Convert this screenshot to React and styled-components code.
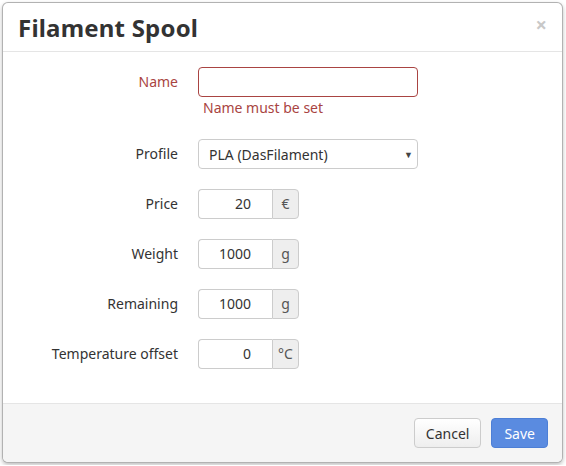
import React from "react";
import styled, { createGlobalStyle } from "styled-components";

const GlobalStyle = createGlobalStyle`
  html, body {
    margin: 0;
    background: #ffffff;
    font-family: "Noto Sans", "Open Sans", sans-serif;
    font-size: 14px;
    color: #333;
  }
  * { box-sizing: border-box; }
`;

const Page = styled.div`
  padding: 2px;
`;

const Modal = styled.div`
  width: 561px;
  height: 461px;
  display: flex;
  flex-direction: column;
  background: #fff;
  border: 1px solid rgba(0, 0, 0, 0.3);
  border-radius: 6px;
  box-shadow: 0 2px 4px rgba(0, 0, 0, 0.25);
  overflow: hidden;
`;

const Header = styled.div`
  display: flex;
  align-items: center;
  justify-content: space-between;
  height: 49px;
  padding: 0 15px;
  border-bottom: 1px solid #e5e5e5;
`;

const Title = styled.h3`
  margin: 0;
  font-size: 24px;
  font-weight: 700;
  color: #333;
  line-height: 26px;
  padding-top: 2px;
  letter-spacing: 0.2px;
`;

const Close = styled.span`
  font-size: 20px;
  font-weight: 700;
  color: #c8c8c8;
  line-height: 1;
  margin-top: -4px;
`;

const Body = styled.div`
  flex: 1;
  padding: 15px;
  display: flex;
  flex-direction: column;
  gap: 20px;
`;

const Row = styled.div`
  display: grid;
  grid-template-columns: 160px auto;
  column-gap: 20px;
  align-items: start;
`;

const Label = styled.label`
  text-align: right;
  line-height: 30px;
  color: ${({ $error }) => ($error ? "#a94442" : "#333")};
`;

const Field = styled.div`
  display: flex;
  flex-direction: column;
`;

const TextInput = styled.div`
  width: 220px;
  height: 30px;
  border: 1px solid ${({ $error }) => ($error ? "#a94442" : "#ccc")};
  border-radius: 4px;
  background: #fff;
`;

const HelpText = styled.div`
  color: #a94442;
  padding-left: 5px;
  line-height: 22px;
`;

const Select = styled.div`
  width: 220px;
  height: 30px;
  border: 1px solid #ccc;
  border-radius: 4px;
  background: #fff;
  display: flex;
  align-items: center;
  justify-content: space-between;
  padding: 0 4px 0 10px;
`;

const Caret = styled.span`
  font-size: 9px;
  color: #444;
`;

const Group = styled.div`
  display: flex;
  height: 30px;
`;

const NumberInput = styled.div`
  width: 74px;
  height: 30px;
  border: 1px solid #ccc;
  border-right: none;
  border-radius: 4px 0 0 4px;
  background: #fff;
  text-align: right;
  padding-right: 21px;
  line-height: 28px;
`;

const Addon = styled.div`
  width: 27px;
  height: 30px;
  border: 1px solid #ccc;
  border-radius: 0 4px 4px 0;
  background: #eee;
  text-align: center;
  line-height: 28px;
  color: #555;
`;

const Footer = styled.div`
  height: 59px;
  border-top: 1px solid #e5e5e5;
  background: #f5f5f5;
  display: flex;
  align-items: center;
  justify-content: flex-end;
  gap: 10px;
  padding: 0 14px;
`;

const Button = styled.button`
  height: 30px;
  padding: 0 ${({ $primary }) => ($primary ? "12px" : "11px")};
  font-family: inherit;
  font-size: 14px;
  border-radius: 4px;
  border: 1px solid ${({ $primary }) => ($primary ? "#4d7fd6" : "#ccc")};
  background: ${({ $primary }) =>
    $primary ? "#5a8be0" : "linear-gradient(#ffffff, #eeeeee)"};
  color: ${({ $primary }) => ($primary ? "#fff" : "#333")};
`;

const numberFields = [
  { label: "Price", value: "20", unit: "€" },
  { label: "Weight", value: "1000", unit: "g" },
  { label: "Remaining", value: "1000", unit: "g" },
  { label: "Temperature offset", value: "0", unit: "°C" },
];

export default function App() {
  return (
    <Page>
      <GlobalStyle />
      <Modal>
        <Header>
          <Title>Filament Spool</Title>
          <Close>×</Close>
        </Header>
        <Body>
          <Row>
            <Label $error>Name</Label>
            <Field>
              <TextInput $error />
              <HelpText>Name must be set</HelpText>
            </Field>
          </Row>
          <Row>
            <Label>Profile</Label>
            <Select>
              <span>PLA (DasFilament)</span>
              <Caret>▼</Caret>
            </Select>
          </Row>
          {numberFields.map((f) => (
            <Row key={f.label}>
              <Label>{f.label}</Label>
              <Group>
                <NumberInput>{f.value}</NumberInput>
                <Addon>{f.unit}</Addon>
              </Group>
            </Row>
          ))}
        </Body>
        <Footer>
          <Button>Cancel</Button>
          <Button $primary>Save</Button>
        </Footer>
      </Modal>
    </Page>
  );
}
